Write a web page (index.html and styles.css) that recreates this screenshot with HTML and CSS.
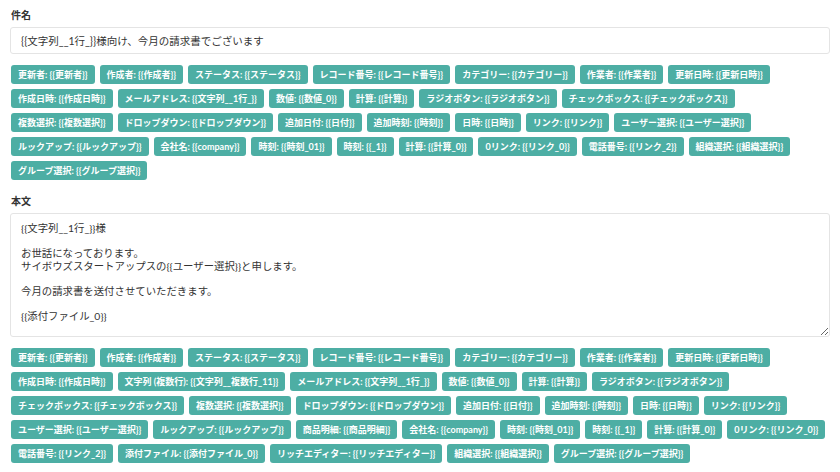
FILE: index.html
```html
<!DOCTYPE html>
<html lang="ja">
<head>
    <meta charset="UTF-8">
    <title>メールテンプレート</title>
    <link rel="stylesheet" href="styles.css">
</head>
<body>
<div id="app">
    <div class="field">
        <label class="field-label" for="subject">件名</label>
        <input id="subject" class="input" value="{{文字列__1行_}}様向け、今月の請求書でございます"/>
        <div class="tag-list">
            <span class="tag">更新者: {{更新者}}</span>
            <span class="tag">作成者: {{作成者}}</span>
            <span class="tag">ステータス: {{ステータス}}</span>
            <span class="tag">レコード番号: {{レコード番号}}</span>
            <span class="tag">カテゴリー: {{カテゴリー}}</span>
            <span class="tag">作業者: {{作業者}}</span>
            <span class="tag">更新日時: {{更新日時}}</span>
            <span class="tag">作成日時: {{作成日時}}</span>
            <span class="tag">メールアドレス: {{文字列__1行_}}</span>
            <span class="tag">数値: {{数値_0}}</span>
            <span class="tag">計算: {{計算}}</span>
            <span class="tag">ラジオボタン: {{ラジオボタン}}</span>
            <span class="tag">チェックボックス: {{チェックボックス}}</span>
            <span class="tag">複数選択: {{複数選択}}</span>
            <span class="tag">ドロップダウン: {{ドロップダウン}}</span>
            <span class="tag">追加日付: {{日付}}</span>
            <span class="tag">追加時刻: {{時刻}}</span>
            <span class="tag">日時: {{日時}}</span>
            <span class="tag">リンク: {{リンク}}</span>
            <span class="tag">ユーザー選択: {{ユーザー選択}}</span>
            <span class="tag">ルックアップ: {{ルックアップ}}</span>
            <span class="tag">会社名: {{company}}</span>
            <span class="tag">時刻: {{時刻_01}}</span>
            <span class="tag">時刻: {{_1}}</span>
            <span class="tag">計算: {{計算_0}}</span>
            <span class="tag">0リンク: {{リンク_0}}</span>
            <span class="tag">電話番号: {{リンク_2}}</span>
            <span class="tag">組織選択: {{組織選択}}</span>
            <span class="tag">グループ選択: {{グループ選択}}</span>
        </div>
    </div>
    <div class="field">
        <label class="field-label" for="body">本文</label>
        <textarea id="body" class="input input-body">{{文字列__1行_}}様

お世話になっております。
サイボウズスタートアップスの{{ユーザー選択}}と申します。

今月の請求書を送付させていただきます。

{{添付ファイル_0}}</textarea>
        <div class="tag-list">
            <span class="tag">更新者: {{更新者}}</span>
            <span class="tag">作成者: {{作成者}}</span>
            <span class="tag">ステータス: {{ステータス}}</span>
            <span class="tag">レコード番号: {{レコード番号}}</span>
            <span class="tag">カテゴリー: {{カテゴリー}}</span>
            <span class="tag">作業者: {{作業者}}</span>
            <span class="tag">更新日時: {{更新日時}}</span>
            <span class="tag">作成日時: {{作成日時}}</span>
            <span class="tag">文字列 (複数行): {{文字列__複数行_11}}</span>
            <span class="tag">メールアドレス: {{文字列__1行_}}</span>
            <span class="tag">数値: {{数値_0}}</span>
            <span class="tag">計算: {{計算}}</span>
            <span class="tag">ラジオボタン: {{ラジオボタン}}</span>
            <span class="tag">チェックボックス: {{チェックボックス}}</span>
            <span class="tag">複数選択: {{複数選択}}</span>
            <span class="tag">ドロップダウン: {{ドロップダウン}}</span>
            <span class="tag">追加日付: {{日付}}</span>
            <span class="tag">追加時刻: {{時刻}}</span>
            <span class="tag">日時: {{日時}}</span>
            <span class="tag">リンク: {{リンク}}</span>
            <span class="tag">ユーザー選択: {{ユーザー選択}}</span>
            <span class="tag">ルックアップ: {{ルックアップ}}</span>
            <span class="tag">商品明細: {{商品明細}}</span>
            <span class="tag">会社名: {{company}}</span>
            <span class="tag">時刻: {{時刻_01}}</span>
            <span class="tag">時刻: {{_1}}</span>
            <span class="tag">計算: {{計算_0}}</span>
            <span class="tag">0リンク: {{リンク_0}}</span>
            <span class="tag">電話番号: {{リンク_2}}</span>
            <span class="tag">添付ファイル: {{添付ファイル_0}}</span>
            <span class="tag">リッチエディター: {{リッチエディター}}</span>
            <span class="tag">組織選択: {{組織選択}}</span>
            <span class="tag">グループ選択: {{グループ選択}}</span>
        </div>
    </div>
</div>
</body>
</html>
```

FILE: styles.css
```css
* {
    box-sizing: border-box;
    margin: 0;
    padding: 0;
}

body {
    background: #fff;
    color: #333;
    font-family: Lato, "Noto Sans CJK JP", sans-serif;
}

#app {
    padding: 9px 10px 0;
}

.field {
    display: flex;
    flex-direction: column;
}

.field + .field {
    margin-top: 15px;
}

.field-label {
    font-size: 10px;
    font-weight: bold;
    line-height: 12px;
    margin: 0 0 6px 1px;
    color: #333;
}

.input {
    width: 100%;
    border: 1px solid #e4e4e4;
    border-radius: 3px;
    padding: 0 10px;
    font-family: inherit;
    font-size: 10.5px;
    color: #333;
    background: #fff;
    outline: none;
}

#subject {
    height: 27px;
}

.input-body {
    height: 124px;
    padding: 8px 10px;
    font-size: 10.4px;
    line-height: 12.6px;
    resize: vertical;
}

.tag-list {
    display: flex;
    flex-wrap: wrap;
    gap: 5px;
    margin-top: 11px;
    padding-left: 1px;
}

.tag {
    display: inline-block;
    height: 19px;
    line-height: 19px;
    padding: 0 7px;
    border-radius: 3px;
    background-color: #4daea4;
    color: #fff;
    font-size: 9px;
    font-weight: bold;
    white-space: nowrap;
}
```
